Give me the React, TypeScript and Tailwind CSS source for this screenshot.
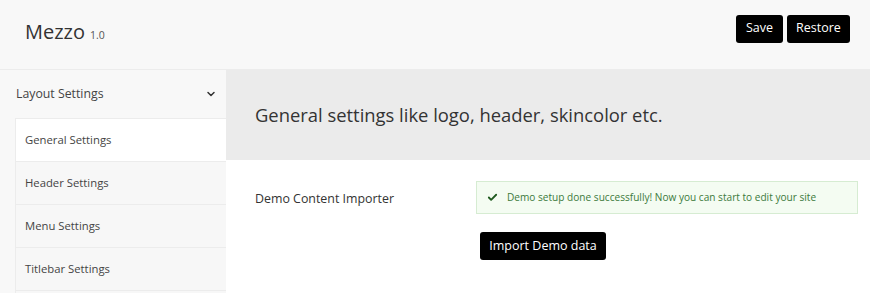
import { Check, ChevronDown } from "lucide-react";

const NAV = ["General Settings", "Header Settings", "Menu Settings", "Titlebar Settings", ""];

const font = { fontFamily: '"Open Sans", "Noto Sans", sans-serif' };

export default function App() {
  return (
    <div className="flex h-[293px] w-[870px] flex-col overflow-hidden bg-white text-[#333]" style={font}>
      <header className="flex h-[70px] shrink-0 items-center justify-between border-b border-[#ececec] bg-[#f8f8f8] pl-[25px] pr-[20px]">
        <div className="flex items-baseline gap-[5px] pb-[6px]">
          <span className="text-[20px] text-[#333]">Mezzo</span>
          <span className="text-[10.5px] text-[#555]">1.0</span>
        </div>
        <div className="mb-[12px] flex gap-[4px]">
          <button className="h-[28px] w-[47px] rounded-[3px] bg-black text-[12.5px] text-white">Save</button>
          <button className="h-[28px] w-[63px] rounded-[3px] bg-black text-[12.5px] text-white">Restore</button>
        </div>
      </header>

      <div className="flex flex-1">
        <aside className="w-[226px] shrink-0 bg-[#f8f8f8]">
          <div className="flex h-[48px] items-center justify-between pl-[16px] pr-[9px] text-[12.3px] text-[#444]">
            Layout Settings
            <ChevronDown size={12} strokeWidth={3} className="text-[#333]" />
          </div>
          <ul className="ml-[15px] border-l border-[#ececec]">
            {NAV.map((n, i) => (
              <li
                key={i}
                className={
                  "flex items-center border-b border-[#ececec] pl-[9px] text-[11.3px] text-[#444] " +
                  (i === 0 ? "h-[44px] border-t bg-white" : "h-[43px] bg-[#f7f7f7]")
                }
              >
                {n}
              </li>
            ))}
          </ul>
        </aside>

        <main className="flex-1">
          <div className="flex h-[90px] items-center bg-[#ebebeb] pl-[29px] text-[18.4px] text-[#333]">
            General settings like logo, header, skincolor etc.
          </div>
          <div className="flex pl-[29px] pr-[12px] pt-[21px]">
            <div className="w-[221px] shrink-0 pt-[9px] text-[12.4px] text-[#333]">Demo Content Importer</div>
            <div className="flex-1">
              <div className="flex h-[33px] items-center gap-[9px] border border-[#d6ecd2] bg-[#f4fcf2] pl-[10px] text-[10.1px] text-[#3c7a3c]">
                <Check size={11} strokeWidth={4} className="text-[#1f5a1f]" />
                Demo setup done successfully! Now you can start to edit your site
              </div>
              <button className="ml-[4px] mt-[18px] h-[28px] w-[126px] rounded-[3px] bg-black text-[12.5px] text-white">
                Import Demo data
              </button>
            </div>
          </div>
        </main>
      </div>
    </div>
  );
}
